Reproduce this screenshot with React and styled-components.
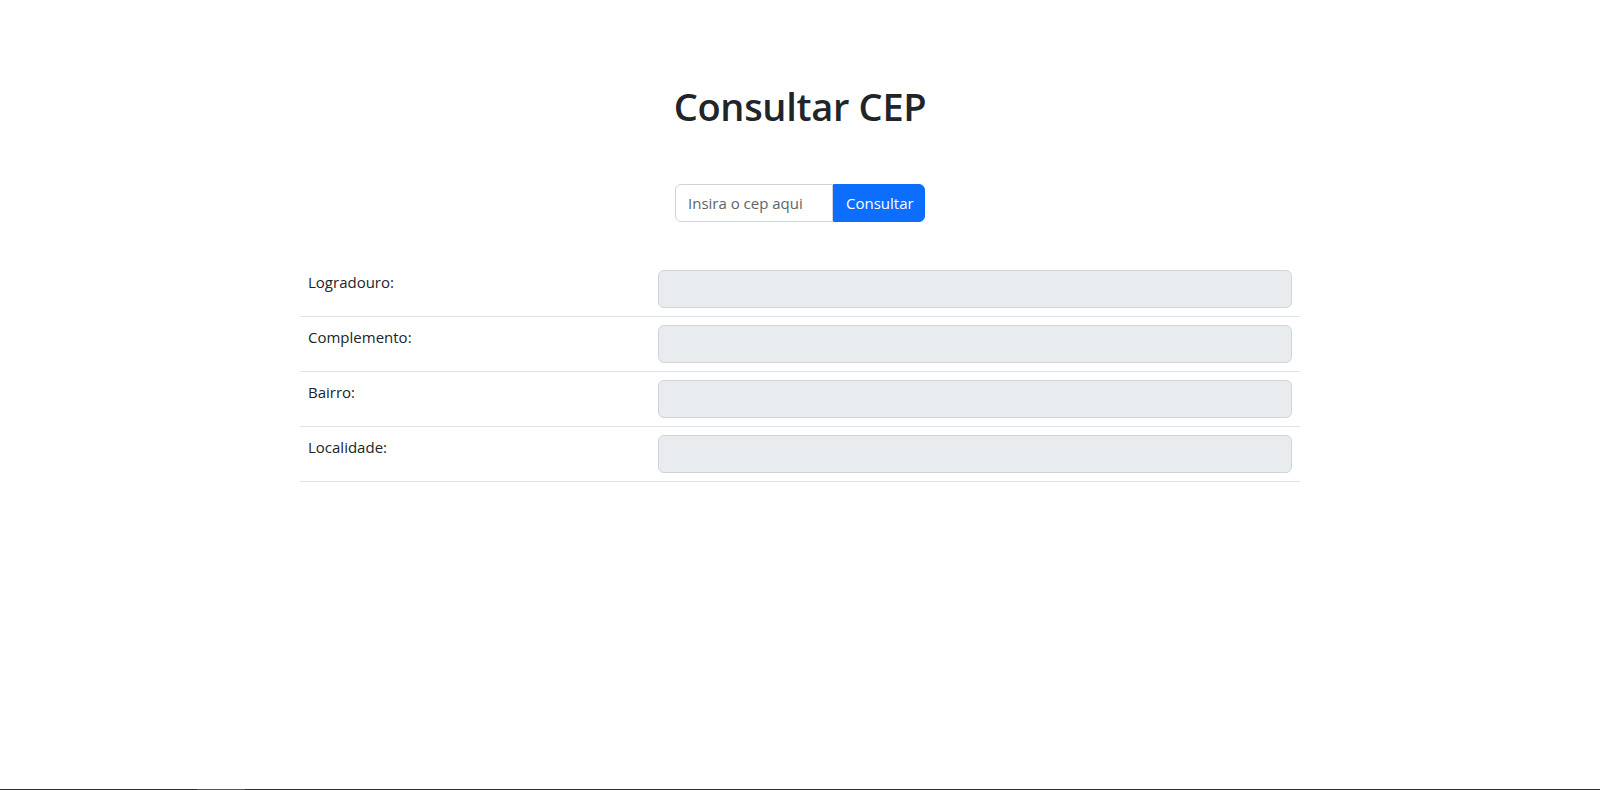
import React from "react";
import styled, { createGlobalStyle } from "styled-components";

const GlobalStyle = createGlobalStyle`
  * {
    box-sizing: border-box;
  }
  body {
    margin: 0;
    background: #fff;
    color: #212529;
    font-family: "Open Sans", "Noto Sans", sans-serif;
    font-size: 16px;
    line-height: 1.5;
  }
`;

const Page = styled.main`
  min-height: 790px;
  display: flex;
  flex-direction: column;
  align-items: center;
  padding-top: 82px;
`;

const Title = styled.h1`
  margin: 0;
  font-size: 38px;
  font-weight: 600;
  line-height: 48px;
  letter-spacing: -0.3px;
  color: #212529;
`;

const SearchForm = styled.form`
  display: flex;
  width: 250px;
  margin-top: 54px;
`;

const CepInput = styled.input`
  flex: 1;
  min-width: 0;
  height: 38px;
  padding: 6px 12px;
  font: inherit;
  font-size: 15px;
  color: #212529;
  border: 1px solid #ced4da;
  border-radius: 6px 0 0 6px;
  outline: none;

  &::placeholder {
    color: #5c636a;
  }
`;

const SubmitButton = styled.button`
  width: 92px;
  height: 38px;
  padding: 6px 12px;
  font: inherit;
  font-size: 15px;
  color: #fff;
  background: #0d6efd;
  border: 1px solid #0d6efd;
  border-radius: 0 6px 6px 0;
  cursor: pointer;
`;

const Table = styled.div`
  width: 1000px;
  margin-top: 40px;
`;

const Row = styled.div`
  display: grid;
  grid-template-columns: 350px 1fr;
  border-bottom: 1px solid #dee2e6;
`;

const Label = styled.div`
  padding: 8px;
  font-size: 15px;
  line-height: 24px;
`;

const Cell = styled.div`
  padding: 8px;
`;

const ResultField = styled.input`
  display: block;
  width: 100%;
  height: 38px;
  background: #e9ecef;
  border: 1px solid #ced4da;
  border-radius: 6px;
`;

const BottomEdge = styled.div`
  position: fixed;
  left: 0;
  right: 0;
  bottom: 0;
  height: 1px;
  background: linear-gradient(
    to right,
    #2d2d2d 197px,
    #555 197px,
    #555 245px,
    #2d2d2d 245px
  );
`;

const fields = ["Logradouro", "Complemento", "Bairro", "Localidade"];

export default function App() {
  return (
    <>
      <GlobalStyle />
      <Page>
        <Title>Consultar CEP</Title>
        <SearchForm onSubmit={(e) => e.preventDefault()}>
          <CepInput type="text" placeholder="Insira o cep aqui" />
          <SubmitButton type="submit">Consultar</SubmitButton>
        </SearchForm>
        <Table>
          {fields.map((name) => (
            <Row key={name}>
              <Label>{name}:</Label>
              <Cell>
                <ResultField type="text" disabled />
              </Cell>
            </Row>
          ))}
        </Table>
      </Page>
      <BottomEdge />
    </>
  );
}
